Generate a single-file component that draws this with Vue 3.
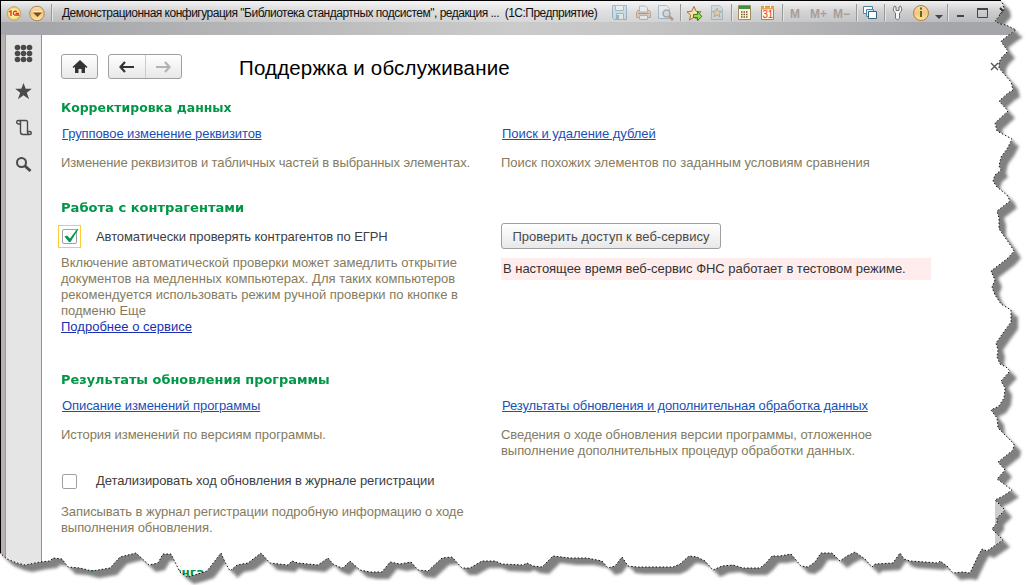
<script setup>
const right = '1000,0 1003,4 1004,10 999,16 995,21 1000,24 1006,25 1016,30 1010,34 1001,41 1004,46 1008,51 1002,57 999,62 999,68 1004,74 1011,82 1013,90 1008,93 999,101 1008,111 995,123 997,131 1012,139 1007,149 1001,157 999,166 1001,170 995,175 993,181 997,187 1007,195 1010,201 997,211 999,218 999,229 1009,243 1014,251 1008,258 991,271 995,280 992,287 995,295 1001,304 1011,310 1011,322 1003,333 996,343 998,350 997,357 1000,364 1006,367 1010,371 1001,381 1005,388 1004,398 999,406 991,410 997,418 998,428 1005,435 1014,444 1013,450 998,462 1005,470 997,479 1012,490 1003,496 995,500 1005,510 997,518 997,523 992,529 1003,540 987,551 982,549 978,556 970,573'
const bottom = '963,572 953,573 947,566 940,561 938,563 925,562 910,561 904,559 900,553 893,563 875,564 872,567 865,559 855,552 847,556 840,561 832,553 821,553 815,562 808,567 801,566 791,554 780,556 772,556 766,563 760,568 743,568 733,565 722,566 713,570 705,561 697,557 689,556 680,564 673,567 637,567 628,566 622,557 615,566 608,568 602,561 587,558 570,558 553,556 542,567 533,566 527,563 523,565 502,564 495,561 482,561 470,568 462,568 452,557 442,558 428,571 418,570 411,562 400,564 390,562 382,572 370,572 360,570 350,561 343,568 339,567 333,564 328,558 318,565 298,563 292,561 288,565 270,563 261,553 248,563 237,565 230,571 225,562 221,553 207,571 198,574 187,577 180,572 171,554 163,554 158,563 149,565 136,553 120,557 110,568 92,571 80,568 68,567 62,559 53,558 50,561 40,562 25,565 17,563 7,559 0,553'
const edge = `${right} ${bottom}`
const outline = `0,0 ${edge}`
const clip = `polygon(${outline.split(' ').map(p => p.split(',').map(n => n + 'px').join(' ')).join(', ')})`
</script>

<template>
  <div class="page">
    <svg class="layer" width="1028" height="585">
      <defs><filter id="soft" x="-5%" y="-5%" width="110%" height="110%"><feGaussianBlur stdDeviation="1.7" /></filter></defs>
      <g fill="#808080" filter="url(#soft)">
        <polygon :points="outline" transform="translate(3 3)" />
        <polygon :points="outline" transform="translate(7 7)" />
      </g>
    </svg>

    <div class="window" :style="{ clipPath: clip }">
      <header class="titlebar">
        <svg class="logo" width="48" height="22" viewBox="0 0 48 22">
          <defs>
            <radialGradient id="gy"><stop offset="0" stop-color="#fffbd8" /><stop offset=".65" stop-color="#ffe98c" /><stop offset="1" stop-color="#f0c34c" /></radialGradient>
            <linearGradient id="go" x2="0" y2="1"><stop offset="0" stop-color="#f7dcae" /><stop offset=".5" stop-color="#f5c780" /><stop offset="1" stop-color="#ffe3a0" /></linearGradient>
          </defs>
          <circle cx="9" cy="11.500" r="6.800" fill="url(#gy)" stroke="#b9a58c" />
          <path d="M4 10l2-1v5M11.800 9.800a2 2 0 1 0-1.500 3.400h4.200M10.500 11.500h3.500" fill="none" stroke="#e22a17" stroke-width="1.300" />
          <circle cx="32" cy="11.500" r="7.300" fill="url(#go)" stroke="#a8865c" />
          <path d="M28 10.500h9l-4.500 4.500z" fill="#76502e" /><path d="M28 9.500h9" stroke="#fff3d0" />
        </svg>
        <i class="sep"></i>
        <span class="title">Демонстрационная конфигурация "Библиотека стандартных подсистем", редакция ...&nbsp; (1С:Предприятие)</span>
        <svg class="tools" width="416" height="34" viewBox="600 0 416 34">
          <g opacity=".42">
            <path d="M612.500 5.500h14v14h-12l-2-2z" fill="#b5d4e5" stroke="#37779d" />
            <path d="M615.500 5.500h8v5h-8zM616.500 13.500h7v6h-7z" fill="#e9f5fa" stroke="#4683a4" /><path d="M618 15v4" stroke="#37779d" stroke-width="2" />
          </g>
          <g opacity=".48">
            <path d="M639.500 10.500h-2l-1 2v5h14v-5l-1-2h-2" fill="#d8b699" stroke="#91664d" />
            <path d="M639.500 12v-6h6l2 2v4zM639.500 15.500h8v4h-8z" fill="#eef2f3" stroke="#6c8ba0" /><path d="M638 13.500h11" stroke="#684d3a" />
          </g>
          <g opacity=".48">
            <path d="M658.500 5.500h8l3 3v10h-11z" fill="#e5eff4" stroke="#5d91ad" />
            <circle cx="666.500" cy="13.500" r="3.500" fill="#b9d9e7" stroke="#7c6b61" stroke-width="1.500" /><path d="M669 16l4 4" stroke="#8a5c3d" stroke-width="2.500" />
          </g>
          <path d="M694 6.500l2.100 4.800 5 .5-3.900 3.300 1.100 5-4.300-2.800-4.500 2.800 1.200-5-3.700-3.300 4.800-.5z" fill="#ffe0a0" stroke="#987747" />
          <path d="M693.500 14.500h4v-3l4.300 5-4.300 4v-3h-4z" fill="#8be44d" stroke="#327d23" />
          <g opacity=".45">
            <path d="M711.500 5.500h8l3 3v11h-11z" fill="#b9d3df" stroke="#5d91ad" />
            <path d="M717 8l1.300 3.200 3.400.2-2.600 2 .9 3.500-3-1.900-3 1.900.9-3.500-2.600-2 3.400-.2z" fill="#e5bf70" stroke="#896d46" />
          </g>
          <path d="M738.500 5.500h12v14h-12z" fill="#fff8dc" stroke="#a08a62" /><path d="M739 7.500h11" stroke="#45903c" stroke-width="3" />
          <path d="M741 12h7M741 14.500h7M741 17h7" stroke="#705332" stroke-width="1.500" stroke-dasharray="1.500 1" />
          <path d="M761.500 6.500h12v13h-12z" fill="#fff8e6" stroke="#a4835c" /><path d="M761 8h13" stroke="#eca54a" stroke-width="3" /><path d="M764.500 5v3M770.500 5v3" stroke="#fff" />
          <text x="762.500" y="18" class="day">31</text>
          <g class="mem"><text x="790" y="18">M</text><text x="810" y="18">M+</text><text x="833" y="18">M−</text></g>
          <g stroke="#4a88ab"><path d="M863.500 6.500h9v7h-9z" fill="#fff" /><path d="M866.500 9.500h7v7h-7z" fill="#d7eef8" /><path d="M868.500 11.500h8v7h-8z" fill="#fff" stroke="#2f6380" /></g>
          <path d="M894.500 6q-3 4.500 1 7v5.500q2 2.500 4 0V13q4-2.500 1-7l-1.500 1v3.500h-3V7z" fill="#f5f5f5" stroke="#707070" />
          <circle cx="921" cy="13" r="7.500" fill="url(#go)" stroke="#b08040" /><path d="M921 7.500v2M921 11v6" fill="none" stroke="#4d701a" stroke-width="2" />
          <path d="M935 15h8l-4 4z" fill="#444" />
          <path d="M957 16h7" stroke="#444" stroke-width="2" /><path d="M977.500 8.500h10v9h-10z" fill="none" stroke="#444" /><path d="M977 9h11" stroke="#444" stroke-width="2" />
          <path d="M1000 8l7 7m0-7-7 7" stroke="#333" stroke-width="2" />
          <path d="M680.500 4v17M731.500 4v17M782.500 4v17M856.500 4v17M884.500 4v17M947.500 4v17" stroke="#999" /><path d="M681.500 4v17M732.500 4v17M783.500 4v17M857.500 4v17M885.500 4v17M948.500 4v17" stroke="#e5e5e5" />
        </svg>
      </header>

      <div class="body">
        <aside class="side">
          <svg width="36" height="150" viewBox="5 35 36 150" fill="#4a4a4a">
            <template v-for="r in 3" :key="r"><circle v-for="c in 3" :key="c" :cx="11.500 + c * 6" :cy="41.500 + r * 6" r="2.800" /></template>
            <path d="M23.500 83l2.200 5.800h6.100l-5 3.900 2.300 6.600-5.600-4-5.600 4 2.300-6.600-5-3.900h6.100z" />
            <path d="M18.500 120.500h7.500q1.500 0 1.500 2v9.500q0 2.500 2 2.500 1.800 0 1.800-1.500t-1.800-1.500h-2M29.500 134.500h-6.500q-2.500 0-2.500-2.500v-8M18.500 120.500q-1.800 0-1.800 1.700t1.800 1.800h2v-2q0-1.500-2-1.500" fill="none" stroke="#4a4a4a" stroke-width="1.400" />
            <circle cx="21.500" cy="162.500" r="4.500" fill="none" stroke="#4a4a4a" stroke-width="2" /><path d="M25 166l5.500 5" stroke="#4a4a4a" stroke-width="3" />
          </svg>
        </aside>
        <main class="content">
          <div class="nav">
            <button class="btn home"><svg width="16" height="14" viewBox="0 0 16 14"><path d="M8 0l7.500 7-1 1-1.500-1v6H9.500V9h-3v4H3V7L1.500 8l-1-1z" fill="#333" /></svg></button>
            <div class="pair">
              <button class="half"><svg width="16" height="12" viewBox="0 0 16 12"><path d="M6 1L1.500 6 6 11M2 6h13" fill="none" stroke="#333" stroke-width="2.200" /></svg></button>
              <button class="half"><svg width="16" height="12" viewBox="0 0 16 12"><path d="M10 1l4.500 5-4.500 5M14 6H1" fill="none" stroke="#b3b3b3" stroke-width="2.200" /></svg></button>
            </div>
            <h1>Поддержка и обслуживание</h1>
            <svg class="close" width="9" height="9" viewBox="0 0 9 9"><path d="M1 1l7 7m0-7L1 8" stroke="#555" stroke-width="1.400" /></svg>
          </div>

          <section class="s1">
            <h2 class="h-a">Корректировка данных</h2>
            <div class="grid">
              <div><a class="link l1">Групповое изменение реквизитов</a><p class="tight">Изменение реквизитов и табличных частей в выбранных элементах.</p></div>
              <div><a class="link l2">Поиск и удаление дублей</a><p class="loose">Поиск похожих элементов по заданным условиям сравнения</p></div>
            </div>
          </section>

          <section class="s2">
            <h2 class="h-b">Работа с контрагентами</h2>
            <div class="grid">
              <div>
                <label class="check focus"><span class="ring"><i class="box"><svg width="17" height="17" viewBox="0 0 17 17"><path d="M2.500 8.500L5 7.500l3 3L15 1h1.500L8.500 14H7z" fill="#00994d" /></svg></i></span>Автоматически проверять контрагентов по ЕГРН</label>
                <p class="note">Включение автоматической проверки может замедлить открытие<br>документов на медленных компьютерах. Для таких компьютеров<br>рекомендуется использовать режим ручной проверки по кнопке в<br>подменю Еще<br><a class="more">Подробнее о сервисе</a></p>
              </div>
              <div>
                <button class="btn access">Проверить доступ к веб-сервису</button>
                <div class="warn">В настоящее время веб-сервис ФНС работает в тестовом режиме.</div>
              </div>
            </div>
          </section>

          <section class="s3">
            <h2 class="h-c">Результаты обновления программы</h2>
            <div class="grid">
              <div><a class="link l3">Описание изменений программы</a><p>История изменений по версиям программы.</p></div>
              <div><a class="link l4">Результаты обновления и дополнительная обработка данных</a><p>Сведения о ходе обновления версии программы, отложенное<br>выполнение дополнительных процедур обработки данных.</p></div>
            </div>
            <label class="check plain"><i class="box"></i>Детализировать ход обновления в журнале регистрации</label>
            <p class="log">Записывать в журнал регистрации подробную информацию о ходе<br>выполнения обновления.</p>
          </section>
          <section class="s4"><h2>Очистка</h2><h2 class="frag">инга</h2></section>
        </main>
        <div class="scroll"></div>
      </div>
    </div>

    <svg class="layer" width="1028" height="585">
      <polyline :points="edge" fill="none" stroke="#111" stroke-dasharray="1.500 2" />
      <path d="M0 .5h1001M.5 0v553" stroke="#000" />
    </svg>
  </div>
</template>

<style>
body { background: #fff; overflow: hidden; }
</style>
<style scoped>
* { box-sizing: border-box; }
.page { position: relative; width: 1028px; height: 585px; overflow: hidden; background: #fff; font: 13px/16px "Liberation Sans", Arial, sans-serif; color: #404040; }
.layer { position: absolute; left: 0; top: 0; pointer-events: none; }
.window { position: relative; width: 1028px; height: 585px; background: #fff; display: flex; flex-direction: column; }
.titlebar { height: 35px; flex: none; display: flex; align-items: flex-start; padding-left: 5px; background: linear-gradient(to bottom, rgba(255,255,255,.8) 2px, rgba(255,255,255,.42) 12px, rgba(255,255,255,.25) 22px, transparent 22px), linear-gradient(to right, #a6a7aa 5%, #cbcbcb 50%, #c6c6c6 62%, #a5a6aa 92%); }
.logo { flex: none; margin: 2px 0 0 0; }
.sep { width: 1px; height: 17px; margin-top: 4px; background: #999; box-shadow: 1px 0 #e5e5e5; margin-left: -2px; }
.title { width: 538px; margin-left: 10px; margin-top: 5px; white-space: nowrap; font-size: 12px; letter-spacing: -.505px; color: #111; flex: none; }
.tools { flex: none; }
.day { font: 10px "Liberation Sans", sans-serif; fill: #dc3b1e; letter-spacing: -.3px; }
.mem { font: bold 12px "Liberation Sans", sans-serif; fill: #a99d96; }
.body { flex: 1; display: flex; min-height: 0; }
.side { width: 42px; flex: none; background: #e5e5e5; border-left: 5px solid #b8b1b1; border-right: 1px solid #909090; box-shadow: inset 1px 0 #999; }
.content { width: 953px; flex: none; padding: 19px 0 0 19px; }
.scroll { width: 20px; background: linear-gradient(#fff 465px, #ccc 465px); }
.nav { display: flex; height: 25px; align-items: flex-start; }
button { font: inherit; color: #4a4a4a; padding: 0; margin: 0; }
.btn, .pair { border: 1px solid #a0a0a0; border-radius: 3px; background: linear-gradient(#fff, #e8e8e8); height: 25px; display: flex; flex: none; align-items: center; justify-content: center; }
.home { width: 37px; }
.pair { width: 74px; margin-left: 10px; }
.half { border: 0; background: none; flex: 1; height: 23px; display: flex; align-items: center; justify-content: center; }
.half + .half { border-left: 1px solid #ccc; }
h1 { flex: none; font-size: 20.5px; line-height: 24px; font-weight: 400; color: #000; margin: 2px 0 0 57px; white-space: nowrap; letter-spacing: .17px; width: 740px; }
.close { flex: none; position: relative; z-index: 1; margin: 8px 0 0 11px; }
h2 { font: bold 12px/16px "DejaVu Sans", sans-serif; color: #009646; margin: 0; width: max-content; height: 16px; padding-top: 1px; white-space: nowrap; transform-origin: left; }
.h-a { transform: scaleX(1.036); }
.h-b { transform: scaleX(1.088); }
.h-c { transform: scaleX(1.075); }
section { height: 100px; }
.s1 { margin-top: 20px; }
.s2 { height: 172px; }
.s3 { height: 193px; }
.grid { display: grid; grid-template-columns: 440px 440px; }
.link { display: block; width: max-content; margin: 11px 0 0 1px; height: 15px; line-height: 15px; color: #1a50b4; text-decoration: underline; white-space: nowrap; }
.l1 { letter-spacing: -.1px; }
.l2 { letter-spacing: -.04px; }
.l3 { letter-spacing: -.08px; }
.l4 { letter-spacing: -.125px; }
p { color: #857b60; margin: 14px 0 0; white-space: nowrap; letter-spacing: -.06px; }
.tight { letter-spacing: -.11px; }
.loose { letter-spacing: 0; }
.check { display: flex; align-items: center; white-space: nowrap; letter-spacing: -.08px; }
.focus { height: 23px; margin: 10px 0 0 -3px; }
.ring { width: 23px; height: 23px; border: 1px solid #ffcc33; margin-right: 15px; padding: 3px; }
.box { display: block; width: 15px; height: 15px; border: 1px solid #a0a0a0; border-radius: 2px; background: #fff; }
.box svg { display: block; margin: -2px 0 0 -1px; overflow: visible; }
.note { margin-top: 7px; letter-spacing: .015px; }
.more { color: #1a2fae; text-decoration: underline; }
.access { width: 220px; height: 26px; margin-top: 8px; padding-top: 1px; letter-spacing: .03px; }
.warn { width: 430px; height: 22px; line-height: 22px; margin-top: 9px; padding-left: 2px; background: #ffeded; color: #333; white-space: nowrap; letter-spacing: -.02px; }
.plain { margin: 14px 0 0 1px; height: 16px; }
.plain .box { margin-right: 19px; }
.log { margin-top: 15px; }
.s4 { height: 20px; display: flex; }
.frag { margin-left: 55px; }
</style>
